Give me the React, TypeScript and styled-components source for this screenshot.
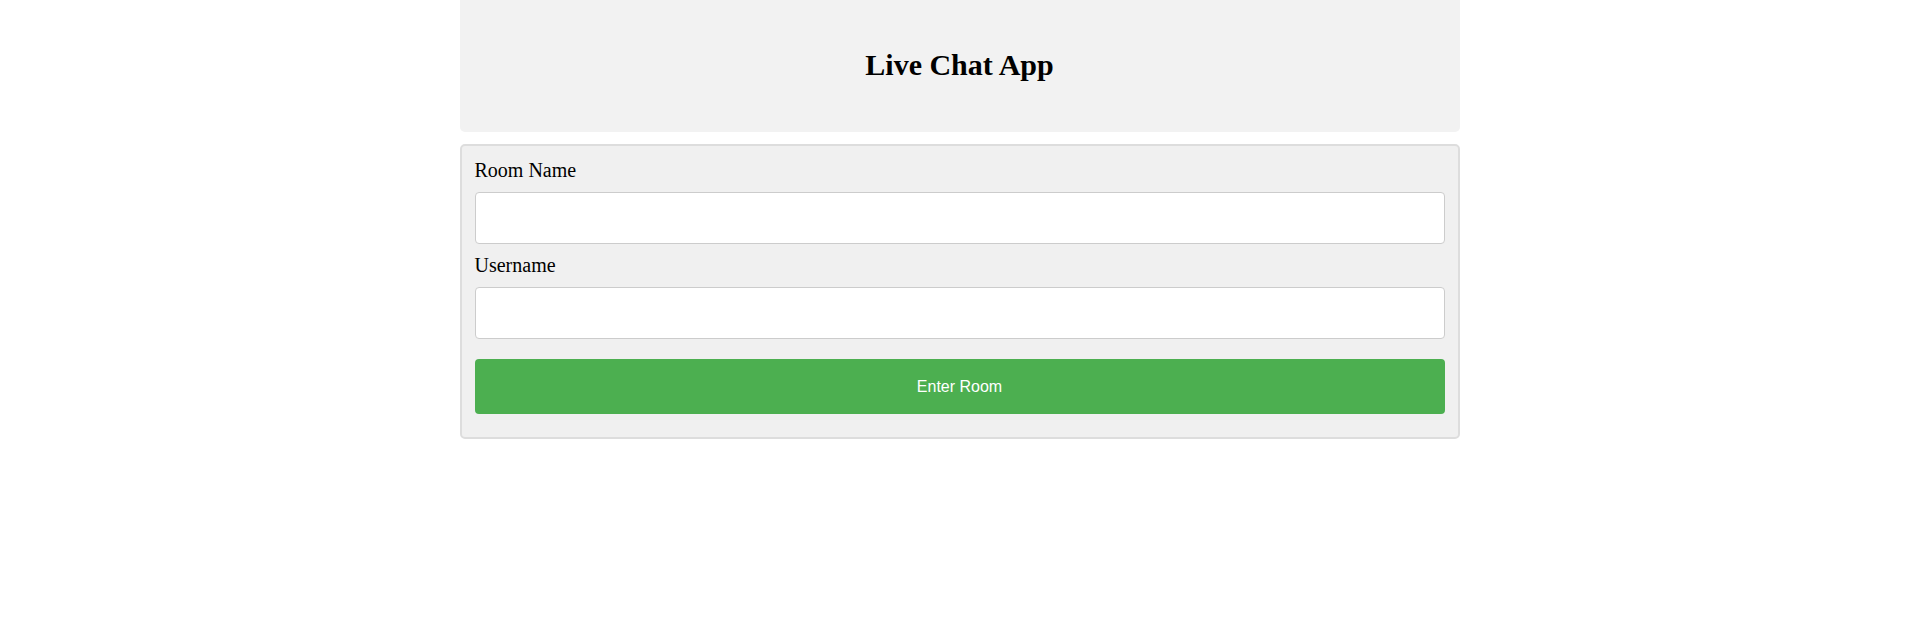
import React from "react";
import styled, { createGlobalStyle } from "styled-components";

const GlobalStyle = createGlobalStyle`
  html, body {
    margin: 0;
    padding: 0;
    background: #ffffff;
    font-family: "Liberation Serif", "Times New Roman", serif;
  }
`;

const Page = styled.div`
  width: 1000px;
  margin: 0 auto;
`;

const Header = styled.header`
  background: #f2f2f2;
  border-radius: 0 0 5px 5px;
  padding: 48px 0 50px;
  text-align: center;
`;

const Title = styled.h1`
  margin: 0;
  font-size: 30px;
  font-weight: bold;
  color: #000;
`;

const Form = styled.form`
  margin-top: 12px;
  background: #f0f0f0;
  border: 2px solid #dddddd;
  border-radius: 5px;
  padding: 13px 13px 23px;
  display: flex;
  flex-direction: column;
`;

const Label = styled.label`
  font-size: 20px;
  color: #000;
  margin-bottom: 10px;
`;

const Input = styled.input`
  box-sizing: border-box;
  width: 100%;
  height: 52px;
  padding: 0 12px;
  margin-bottom: 10px;
  border: 1px solid #cccccc;
  border-radius: 4px;
  background: #ffffff;
  font-size: 16px;
  outline: none;
`;

const Button = styled.button`
  margin-top: 10px;
  height: 55px;
  border: none;
  border-radius: 4px;
  background: #4caf50;
  color: #ffffff;
  font-family: "Liberation Sans", Arial, sans-serif;
  font-size: 16px;
  cursor: pointer;
`;

export default function App() {
  return (
    <>
      <GlobalStyle />
      <Page>
        <Header>
          <Title>Live Chat App</Title>
        </Header>
        <Form onSubmit={(e) => e.preventDefault()}>
          <Label htmlFor="room">Room Name</Label>
          <Input id="room" type="text" />
          <Label htmlFor="username">Username</Label>
          <Input id="username" type="text" />
          <Button type="submit">Enter Room</Button>
        </Form>
      </Page>
    </>
  );
}
